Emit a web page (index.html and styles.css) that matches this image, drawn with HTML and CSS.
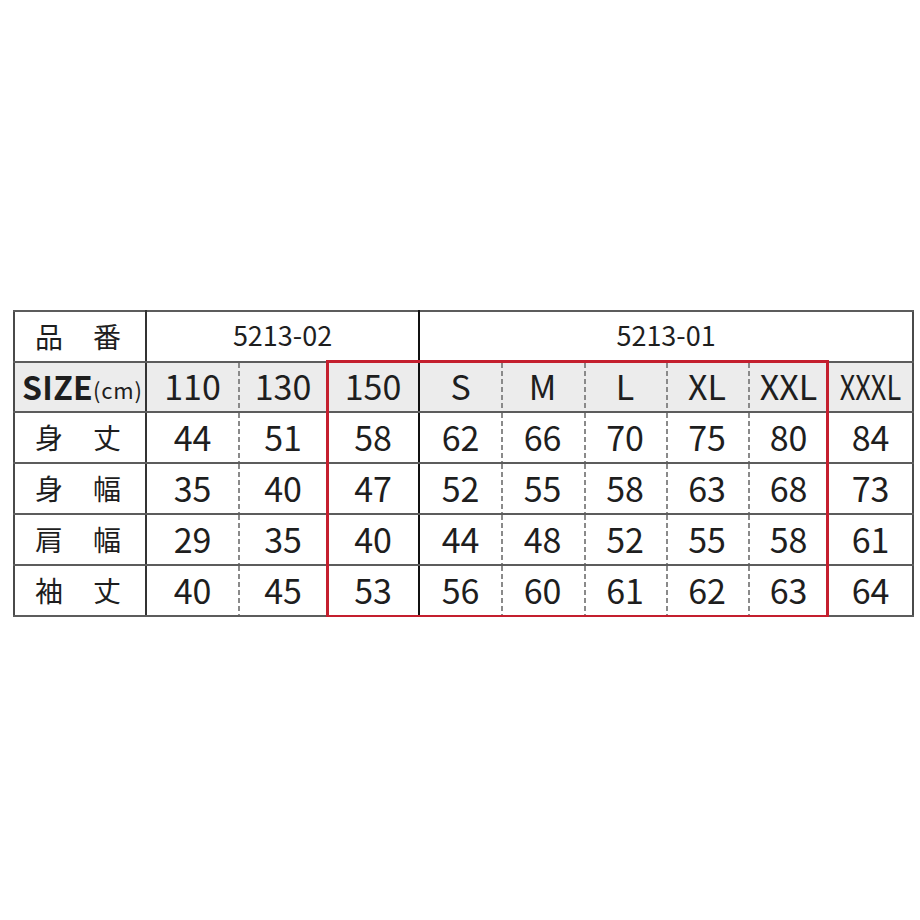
FILE: index.html
```html
<!DOCTYPE html>
<html lang="ja">
<head>
<meta charset="utf-8">
<title>サイズ表</title>
<link rel="stylesheet" href="styles.css">
</head>
<body>
<div class="page">
  <div class="chart">
    <table class="sizes">
      <colgroup>
        <col class="c-label"><col class="c-110"><col class="c-130"><col class="c-150">
        <col class="c-s"><col class="c-m"><col class="c-l"><col class="c-xl"><col class="c-xxl"><col class="c-xxxl">
      </colgroup>
      <tr class="r-code">
        <th class="label"><span class="kj"><span>品</span><span>番</span></span></th>
        <th colspan="3" class="code group-end">5213-02</th>
        <th colspan="6" class="code">5213-01</th>
      </tr>
      <tr class="r-size">
        <th class="label size"><b>SIZE</b><small>(cm)</small></th>
        <td>110</td><td class="dash">130</td><td class="group-end">150</td>
        <td>S</td><td class="dash">M</td><td class="dash">L</td><td class="dash">XL</td><td class="dash">XXL</td><td><span class="squeeze">XXXL</span></td>
      </tr>
      <tr>
        <th class="label"><span class="kj"><span>身</span><span>丈</span></span></th>
        <td>44</td><td class="dash">51</td><td class="group-end">58</td>
        <td>62</td><td class="dash">66</td><td class="dash">70</td><td class="dash">75</td><td class="dash">80</td><td>84</td>
      </tr>
      <tr>
        <th class="label"><span class="kj"><span>身</span><span>幅</span></span></th>
        <td>35</td><td class="dash">40</td><td class="group-end">47</td>
        <td>52</td><td class="dash">55</td><td class="dash">58</td><td class="dash">63</td><td class="dash">68</td><td>73</td>
      </tr>
      <tr>
        <th class="label"><span class="kj"><span>肩</span><span>幅</span></span></th>
        <td>29</td><td class="dash">35</td><td class="group-end">40</td>
        <td>44</td><td class="dash">48</td><td class="dash">52</td><td class="dash">55</td><td class="dash">58</td><td>61</td>
      </tr>
      <tr>
        <th class="label"><span class="kj"><span>袖</span><span>丈</span></span></th>
        <td>40</td><td class="dash">45</td><td class="group-end">53</td>
        <td>56</td><td class="dash">60</td><td class="dash">61</td><td class="dash">62</td><td class="dash">63</td><td>64</td>
      </tr>
    </table>
    <div class="highlight"></div>
  </div>
</div>
</body>
</html>
```

FILE: styles.css
```css
html, body {
  margin: 0;
  padding: 0;
  background: #ffffff;
}

.page {
  padding: 310px 0 0 13px;
  font-family: "Noto Sans CJK JP", "Noto Sans", sans-serif;
  color: #1e1e1e;
}

.chart {
  position: relative;
  width: 899px;
}

.sizes {
  border-collapse: collapse;
  table-layout: fixed;
  width: 899px;
  border: 2px solid #4a4a4a;
}

.c-label { width: 132px; }
.c-110 { width: 92px; }
.c-130 { width: 90px; }
.c-150 { width: 91px; }
.c-s { width: 82px; }
.c-m { width: 83px; }
.c-l { width: 82px; }
.c-xl { width: 82px; }
.c-xxl { width: 81px; }
.c-xxxl { width: 84px; }

.sizes tr {
  height: 51px;
}

.sizes .r-size {
  height: 50px;
}

.sizes th,
.sizes td {
  padding: 0 0 2px 0;
  text-align: center;
  vertical-align: middle;
  border-top: 2px solid #5c5c5c;
  border-bottom: 2px solid #5c5c5c;
  font-weight: 400;
  line-height: 1;
  white-space: nowrap;
}

.sizes td {
  font-size: 34px;
}

.sizes .label {
  border-right: 2px solid #333333;
}

.sizes .group-end {
  border-right: 2px solid #111111;
}

.sizes .code {
  font-size: 27px;
  padding-bottom: 4px;
}

.r-size th,
.r-size td {
  background-color: #ececec;
}

.sizes td.dash {
  background-image: linear-gradient(#8a8a8a 62%, transparent 62%);
  background-size: 2px 8px;
  background-repeat: repeat-y;
  background-position: 0 0;
}

.kj {
  display: flex;
  justify-content: center;
  gap: 30px;
  font-size: 28px;
  padding-right: 4px;
}

.sizes th.size {
  text-align: left;
  padding: 0 0 2px 7px;
}

.size b {
  font-size: 32px;
  font-weight: 700;
  letter-spacing: 0.3px;
}

.size small {
  font-size: 22px;
  letter-spacing: 0.8px;
  margin-left: 0;
  vertical-align: 1px;
}

.squeeze {
  display: inline-block;
  transform: scaleX(0.8);
  margin: 0 -8px;
}

.highlight {
  position: absolute;
  left: 313px;
  top: 50px;
  width: 503px;
  height: 258px;
  box-sizing: border-box;
  border: 3px solid #c41f2e;
  pointer-events: none;
}
```
